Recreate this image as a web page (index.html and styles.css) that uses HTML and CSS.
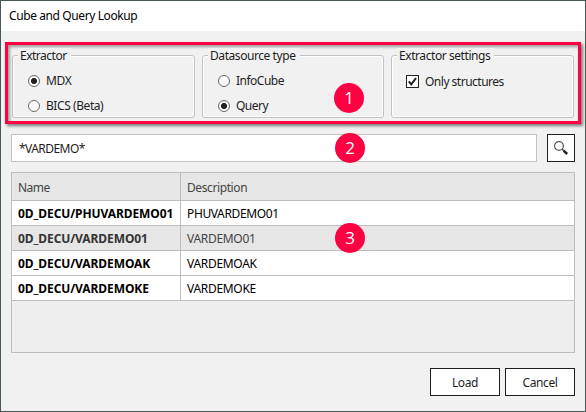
FILE: index.html
```html
<!DOCTYPE html>
<html lang="en">
<head>
<meta charset="utf-8">
<title>Cube and Query Lookup</title>
<link rel="stylesheet" href="styles.css">
</head>
<body>
<main class="window">
  <header class="titlebar"><span class="t-title">Cube and Query Lookup</span></header>
  <section class="options">
    <div class="group">
      <span class="legend t-extractor">Extractor</span>
      <div class="option"><i class="radio checked"></i><span class="t-mdx">MDX</span></div>
      <div class="option"><i class="radio"></i><span class="t-bics">BICS (Beta)</span></div>
    </div>
    <div class="group">
      <span class="legend t-source">Datasource type</span>
      <div class="option"><i class="radio"></i><span class="t-infocube">InfoCube</span></div>
      <div class="option"><i class="radio checked"></i><span class="t-query">Query</span></div>
    </div>
    <div class="group">
      <span class="legend t-settings">Extractor settings</span>
      <div class="option check-option">
        <svg class="checkbox" viewBox="0 0 13 13"><rect x=".5" y=".5" width="12" height="12" fill="#fff" stroke="#222"/><path d="M2.8 6.4 5.2 9.4 10 3.2" fill="none" stroke="#222" stroke-width="2"/></svg>
        <span class="t-structures">Only structures</span>
      </div>
    </div>
  </section>
  <section class="search">
    <div class="input"><span class="t-input">*VARDEMO*</span></div>
    <div class="button search-button">
      <svg class="magnifier" viewBox="0 0 16 16"><circle cx="6" cy="6" r="4.4" fill="#fff" stroke="#555" stroke-width="1.2"/><path d="M9 9 10.8 10.8" stroke="#444" stroke-width="1.4"/><path d="M10.6 10.6 14.2 14" stroke="#222" stroke-width="2.5"/></svg>
    </div>
  </section>
  <section class="table">
    <div class="row head"><div class="name"><span class="t-name">Name</span></div><div class="desc"><span class="t-desc">Description</span></div></div>
    <div class="row"><div class="name"><span class="t-n1">0D_DECU/PHUVARDEMO01</span></div><div class="desc"><span class="t-d1">PHUVARDEMO01</span></div></div>
    <div class="row selected"><div class="name"><span class="t-n2">0D_DECU/VARDEMO01</span></div><div class="desc"><span class="t-d2">VARDEMO01</span></div></div>
    <div class="row"><div class="name"><span class="t-n3">0D_DECU/VARDEMOAK</span></div><div class="desc"><span class="t-d3">VARDEMOAK</span></div></div>
    <div class="row"><div class="name"><span class="t-n4">0D_DECU/VARDEMOKE</span></div><div class="desc"><span class="t-d4">VARDEMOKE</span></div></div>
  </section>
  <footer class="actions">
    <div class="button"><span class="t-load">Load</span></div>
    <div class="button"><span class="t-cancel">Cancel</span></div>
  </footer>
  <span class="badge one">1</span>
  <span class="badge two">2</span>
  <span class="badge three">3</span>
</main>
</body>
</html>
```
FILE: styles.css
```css
* { box-sizing: border-box; }
body { margin: 0; }
.window {
  position: relative;
  width: 586px;
  height: 412px;
  border: 1px solid #465954;
  background: #f1f1f1;
  font: 12px/16px "Noto Sans", "Open Sans", sans-serif;
  color: #1e1e1e;
  white-space: nowrap;
  overflow: hidden;
}
.titlebar { height: 30px; padding: 7px 0 0 8px; background: #fff; color: #000; }
.options {
  display: flex;
  gap: 7px;
  width: 576px;
  height: 82px;
  margin: 11px 0 0 4px;
  padding: 10px 4px 0;
  border: 3px solid #ff0042;
  box-shadow: 2px 2px 3px rgba(0, 0, 0, .5), inset 2px 2px 3px rgba(0, 0, 0, .35);
}
.group {
  width: 183px;
  height: 63px;
  padding: 16px 0 0 15px;
  border: 1px solid #c3c3c3;
  border-radius: 3px;
  box-shadow: inset 0 0 0 1px #fff;
}
.group:nth-child(2) { width: 182px; }
.legend {
  display: block;
  width: fit-content;
  margin: -24px 0 5px -10px;
  padding: 0 4px 0 2px;
  background: #f1f1f1;
}
.option { display: flex; align-items: center; gap: 6px; height: 25px; margin-top: -1px; }
.option + .option { margin-top: 0; }
.radio {
  width: 12px;
  height: 12px;
  border: 1px solid #666;
  border-radius: 50%;
  background: #fff;
}
.radio.checked { background: radial-gradient(circle, #222 0 2.7px, #fff 3.4px); }
.check-option { height: 27px; margin-left: -1px; }
.checkbox { width: 13px; height: 13px; }
.search { display: flex; gap: 10px; margin: 10px 0 0 10px; }
.input { width: 526px; height: 28px; padding: 6px 7px; border: 1px solid #c3c3c3; background: #fff; }
.button {
  display: flex;
  justify-content: center;
  align-items: center;
  width: 70px;
  height: 28px;
  padding-top: 1px;
  border: 1px solid #1e1e1e;
  background: #fff;
}
.search-button { width: 28px; padding-top: 0; }
.magnifier { width: 16px; height: 16px; }
.table { width: 564px; height: 181px; margin: 10px 0 0 10px; border: 1px solid #bdbdbd; background: #eee; }
.row { display: flex; height: 25px; border-bottom: 1px solid #bdbdbd; background: #fff; color: #000; }
.head { height: 28px; background: #e6e6e6; color: #444; }
.selected { background: #e6e6e6; color: #444; }
.name { width: 169px; padding: 5px 0 0 6px; border-right: 1px solid #bdbdbd; font-weight: 700; }
.desc { padding: 5px 0 0 6px; }
.head div { padding-top: 7px; font-weight: 400; }
.selected .name { color: #333; }
.actions { display: flex; justify-content: flex-end; gap: 5px; margin: 15px 10px 0 0; }
.badge {
  position: absolute;
  width: 30px;
  height: 30px;
  border-radius: 50%;
  background: #ff0042;
  color: #fff;
  font: 17px/29px "Open Sans", sans-serif;
  text-align: center;
}
.one { left: 333px; top: 82px; }
.two { left: 334px; top: 132px; }
.three { left: 334px; top: 222px; }

.t-title { letter-spacing: -.4px; }
.t-extractor { letter-spacing: -.5px; }
.t-source, .t-settings { letter-spacing: -.43px; }
.t-structures, .t-query { letter-spacing: -.5px; }
.t-bics { letter-spacing: -.43px; }
.t-infocube { letter-spacing: -.5px; }
.t-mdx { letter-spacing: -.3px; }
.t-input { letter-spacing: -.55px; }
.t-name { letter-spacing: -.5px; }
.t-desc { letter-spacing: -.4px; }
.t-n1, .t-n2, .t-n3, .t-n4 { letter-spacing: -.09px; }
.t-d1 { letter-spacing: -.38px; }
.t-d2, .t-d3, .t-d4 { letter-spacing: -.3px; }
.t-load, .t-cancel { letter-spacing: -.4px; }
```
